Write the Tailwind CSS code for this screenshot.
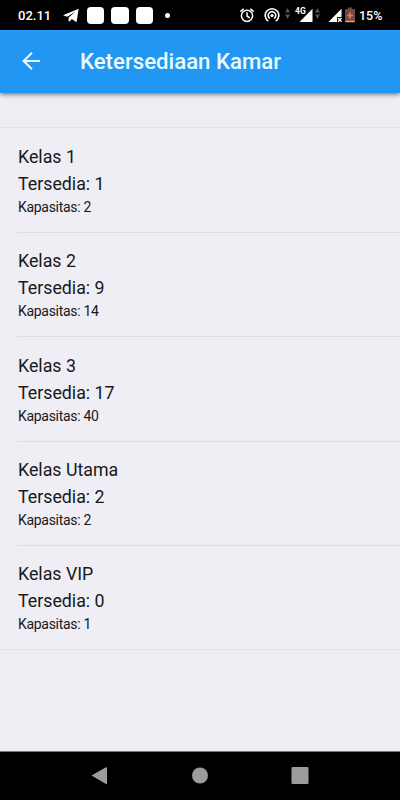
<!DOCTYPE html>
<html lang="id">
<head>
<meta charset="utf-8">
<title>Ketersediaan Kamar</title>
<script src="https://cdn.jsdelivr.net/npm/@tailwindcss/browser@4"></script>
</head>
<body class="bg-[#efeef4]">
<div class="flex h-[800px] w-[400px] flex-col overflow-hidden bg-[#efeef4] font-['Roboto',sans-serif] text-[#18181d]">
  <div class="flex h-[30px] shrink-0 items-center bg-black text-white">
    <span class="ml-[18px] w-[45px] pt-px text-[13px] font-medium leading-4">02.11</span>
    <svg class="h-[30px] w-4" viewBox="0 0 16 30" fill="#fff"><path d="M0 15.3 15.7 8.8 13.5 22.3 8.8 19.1 6.7 21.6 5.6 21.2V17.6L12.7 11.6 4.2 16.7Z"/></svg>
    <div class="ml-2 flex gap-[7px]">
      <div class="h-[17px] w-[17px] rounded-[4px] bg-white"></div>
      <div class="h-[17px] w-[18px] rounded-[4px] bg-white"></div>
      <div class="h-[17px] w-[17px] rounded-[4px] bg-white"></div>
    </div>
    <div class="ml-[12px] h-[5px] w-[5px] rounded-full bg-white"></div>
    <svg class="ml-[69px] h-[30px] w-[16px]" viewBox="0 0 16 30" fill="none" stroke="#fff" stroke-width="1.5"><circle cx="8" cy="15.8" r="5.6"/><path d="M8 12.3V16l2.8 1.8M1.4 11.6 4.6 8.9M14.6 11.6 11.4 8.9"/></svg>
    <svg class="ml-[9px] h-[30px] w-[16px]" viewBox="0 0 16 30" fill="none" stroke="#fff" stroke-width="1.6"><path d="M4.3 21.2A6.8 6.8 0 1 1 11.7 21.2"/><path d="M5.9 18.6A3.8 3.8 0 1 1 10.1 18.6"/><circle cx="8" cy="15.6" r="1.6" fill="#fff" stroke="none"/></svg>
    <svg class="ml-[5px] h-[30px] w-[5px]" viewBox="0 0 5 30" fill="#555"><path d="M2.5 8 5 12.5H0ZM2.5 19 5 14.5H0Z"/></svg>
    <div class="relative ml-[5px] h-[30px] w-[18px]">
      <svg class="h-[30px] w-[18px]" viewBox="0 0 18 30" fill="#fff"><path d="M17.5 8.7V22H4.5Z"/></svg>
      <span class="absolute left-0 top-[7px] bg-black text-[8.5px] font-bold leading-[8px]">4G</span>
    </div>
    <svg class="ml-[2px] h-[30px] w-[5px]" viewBox="0 0 5 30" fill="#555"><path d="M2.5 8 5 12.5H0ZM2.5 19 5 14.5H0Z"/></svg>
    <svg class="ml-[8px] h-[30px] w-[15px]" viewBox="0 0 15 30"><path d="M13.5 8.7V17H9V22H.5Z" fill="#fff"/><path d="m10 18 3.5 3.8M13.5 18 10 21.8" stroke="#fff" stroke-width="1.4"/></svg>
    <svg class="ml-[2px] h-[30px] w-[10px]" viewBox="0 0 10 30"><path d="M3 7.5H7V9H9Q10 9 10 10V21.5Q10 22.5 9 22.5H1Q0 22.5 0 21.5V10Q0 9 1 9H3Z" fill="#75483c"/><path d="M.5 20.8H9.5V22H.5Z" fill="#e8a88f"/><path d="M2 15.5H8M5 12.5V18.5" stroke="#ee7a55" stroke-width="1.7"/></svg>
    <span class="ml-[4px] pt-px text-[12.5px] font-medium leading-4">15%</span>
  </div>

  <header class="z-10 flex h-[62.5px] shrink-0 items-center bg-[#2196f3] shadow-[0_1px_5px_rgba(0,0,0,0.6)]">
    <svg class="ml-[22px] h-[18px] w-[18px]" viewBox="0 0 18 18" fill="none" stroke="#e9fbff" stroke-width="2"><path d="M18 9H1.5M10 .8 1.6 9 10 17.2"/></svg>
    <h1 class="ml-[40px] text-[22.2px] font-medium leading-7 text-[#eafcff]">Ketersediaan Kamar</h1>
  </header>

  <main class="flex-1 pt-[34px]">
    <ul class="border-y border-[#e1e1e6] [&>li+li]:before:absolute [&>li+li]:before:left-[17px] [&>li+li]:before:right-0 [&>li+li]:before:top-0 [&>li+li]:before:h-px [&>li+li]:before:bg-[#dddde2] [&>li+li]:before:content-['']">
      <li class="relative h-[104.4px] pl-[18px] pt-[15.3px]"><p class="text-[17.8px] leading-[27px]">Kelas 1</p><p class="text-[17.8px] leading-[27px]">Tersedia: 1</p><p class="text-[14px] leading-5 tracking-[-0.3px]">Kapasitas: 2</p></li>
      <li class="relative h-[104.4px] pl-[18px] pt-[15.3px]"><p class="text-[17.8px] leading-[27px]">Kelas 2</p><p class="text-[17.8px] leading-[27px]">Tersedia: 9</p><p class="text-[14px] leading-5 tracking-[-0.3px]">Kapasitas: 14</p></li>
      <li class="relative h-[104.4px] pl-[18px] pt-[15.3px]"><p class="text-[17.8px] leading-[27px]">Kelas 3</p><p class="text-[17.8px] leading-[27px]">Tersedia: 17</p><p class="text-[14px] leading-5 tracking-[-0.3px]">Kapasitas: 40</p></li>
      <li class="relative h-[104.4px] pl-[18px] pt-[15.3px]"><p class="text-[17.8px] leading-[27px]">Kelas Utama</p><p class="text-[17.8px] leading-[27px]">Tersedia: 2</p><p class="text-[14px] leading-5 tracking-[-0.3px]">Kapasitas: 2</p></li>
      <li class="relative h-[104.4px] pl-[18px] pt-[15.3px]"><p class="text-[17.8px] leading-[27px]">Kelas VIP</p><p class="text-[17.8px] leading-[27px]">Tersedia: 0</p><p class="text-[14px] leading-5 tracking-[-0.3px]">Kapasitas: 1</p></li>
    </ul>
  </main>

  <nav class="flex h-[49px] shrink-0 items-center justify-center border-t border-[#777] bg-black">
    <svg class="h-[48px] w-[300px]" viewBox="0 0 300 48" fill="#9c9c9c"><path d="M41.5 23.5 56 15.3Q57 15 57 16V31.5Q57 32.5 56 32Z"/><circle cx="150" cy="23.5" r="8"/><rect x="241.5" y="15" width="17" height="17" rx="1"/></svg>
  </nav>
</div>
</body>
</html>
